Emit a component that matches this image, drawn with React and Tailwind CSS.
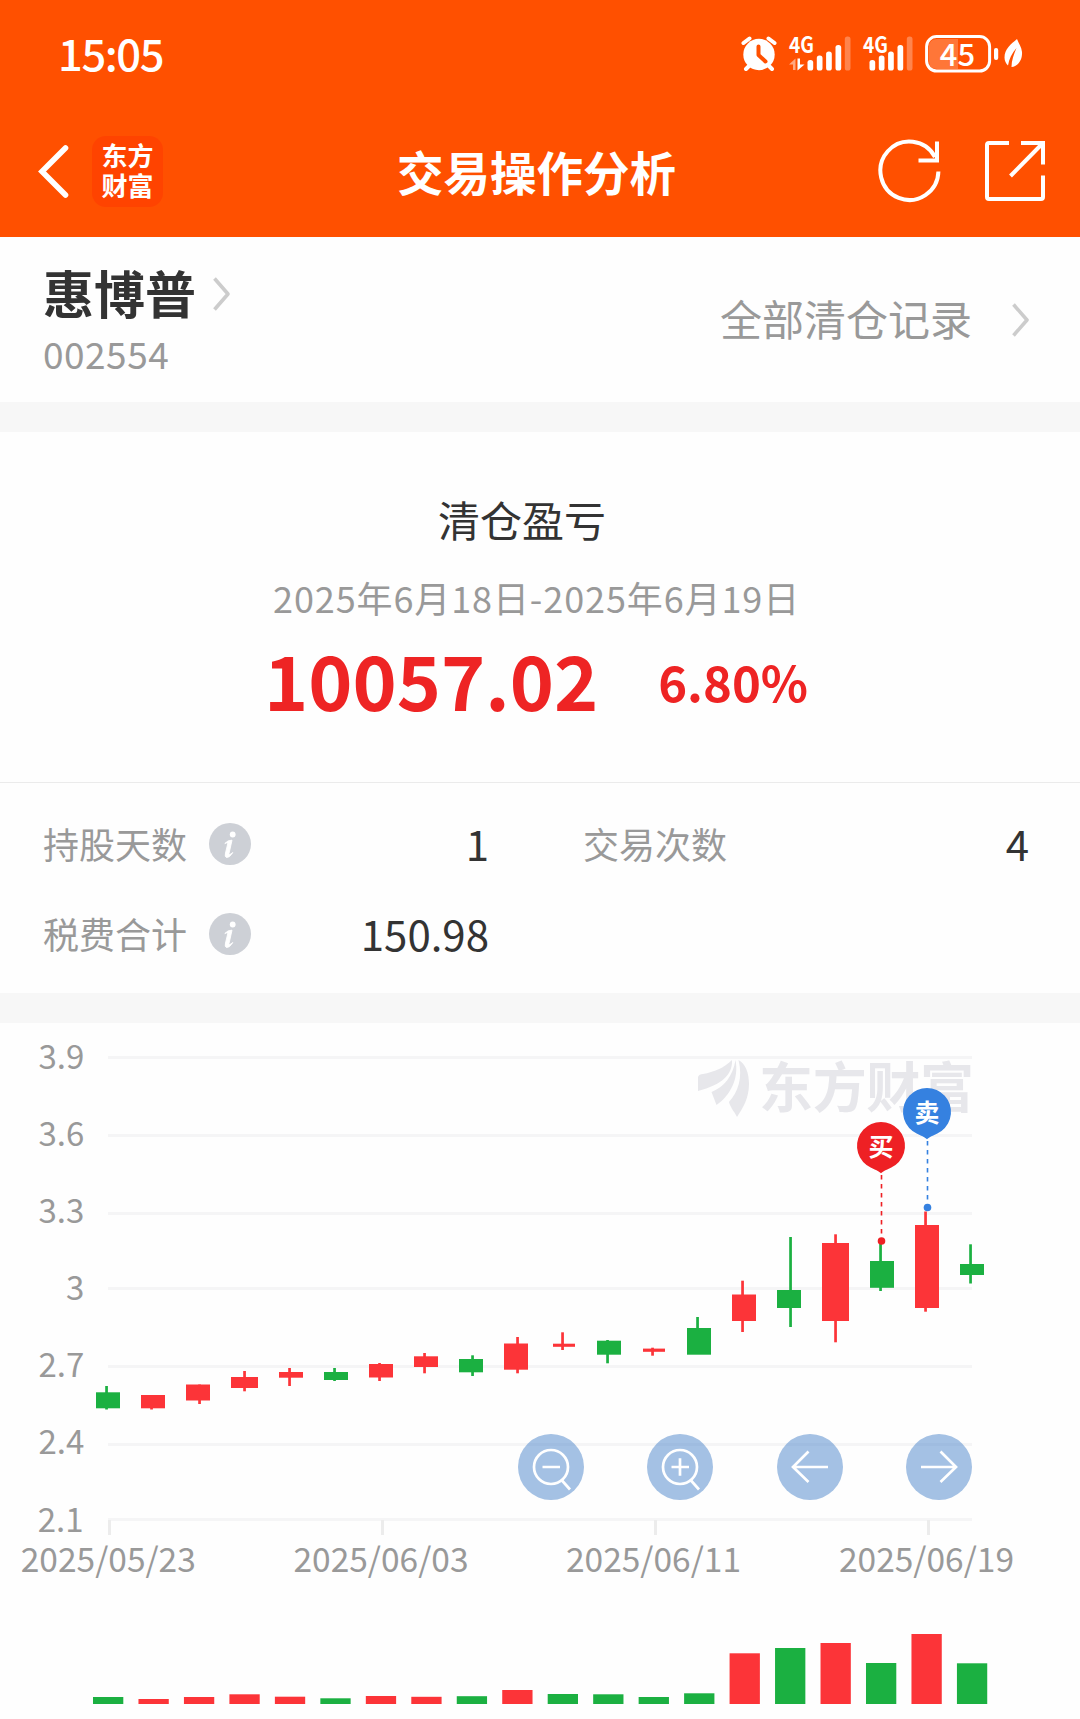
const RED = '#fc3438';
const GREEN = '#1bb041';

// body: [x, width, top, bottom], wick: [x, top, bottom]
const candles = [
  { c: GREEN, body: [96, 24, 1392.3, 1408.3], wick: [106.5, 1386, 1409.5] },
  { c: RED, body: [141, 24, 1395, 1408.3], wick: [151.5, 1395, 1409.5] },
  { c: RED, body: [186, 24, 1384.5, 1400.5], wick: [199.5, 1384.5, 1404] },
  { c: RED, body: [231, 27, 1377, 1388], wick: [244.5, 1371, 1391.3] },
  { c: RED, body: [279, 24, 1372, 1377.7], wick: [289.5, 1368, 1386] },
  { c: GREEN, body: [324, 24, 1372, 1380], wick: [334.5, 1368, 1381] },
  { c: RED, body: [369, 24, 1364, 1377.5], wick: [379.5, 1363, 1381] },
  { c: RED, body: [414, 24, 1356.3, 1367], wick: [424.5, 1353, 1373.3] },
  { c: GREEN, body: [459, 24, 1359, 1372.3], wick: [472.5, 1355.3, 1376] },
  { c: RED, body: [504, 24, 1343.5, 1369.7], wick: [517.5, 1337, 1373.3] },
  { c: RED, body: [553, 22, 1343.7, 1346.8], wick: [562.5, 1332.3, 1350] },
  { c: GREEN, body: [597, 24, 1340.7, 1354.7], wick: [607.5, 1340, 1363.3] },
  { c: RED, body: [643, 22, 1348.6, 1351.8], wick: [652.5, 1347.7, 1355.7] },
  { c: GREEN, body: [687, 24, 1328, 1354.7], wick: [697.5, 1317, 1354] },
  { c: RED, body: [732, 24, 1294.5, 1321], wick: [742.5, 1280.7, 1332] },
  { c: GREEN, body: [777, 24, 1290, 1308], wick: [790.5, 1237, 1327] },
  { c: RED, body: [822, 27, 1243, 1321], wick: [835.5, 1234.3, 1342.3] },
  { c: GREEN, body: [870, 24, 1261, 1287.8], wick: [880.5, 1244, 1291] },
  { c: RED, body: [915, 24, 1225, 1308], wick: [925.5, 1211.5, 1311.7] },
  { c: GREEN, body: [960, 24, 1264, 1275], wick: [970.5, 1244.3, 1283.5] },
];

const volumeTops = [
  1697, 1699, 1697, 1694.3, 1696.7, 1698.3, 1696, 1696.8, 1696.2, 1690, 1694, 1694.3, 1697, 1693.3, 1653.3, 1648,
  1643, 1663, 1634, 1663.3,
];
const volumeColors = [...'grrrrgrrgrggggrgrgrg'].map((k) => (k === 'g' ? GREEN : RED));

const yAxis = [
  ['3.9', 1057.5, 1068.7],
  ['3.6', 1135.5, 1145.7],
  ['3.3', 1213.5, 1222.7],
  ['3', 1288.5, 1299.7],
  ['2.7', 1366.5, 1377],
  ['2.4', 1444.5, 1454],
  ['2.1', 1519.5, 1532],
];

const xAxis = [
  ['2025/05/23', 109.5, 108.3],
  ['2025/06/03', 382.5, 381],
  ['2025/06/11', 655.5, 653.5],
  ['2025/06/19', 928.5, 926.5],
];

function Signal({ arrows }) {
  return (
    <svg className="overflow-visible" width="62" height="36" viewBox="0 0 62 36" fill="#fff">
      <text x="0" y="17.300" fontSize="22.5" fontWeight="700" textLength="25" lengthAdjust="spacingAndGlyphs">4G</text>
      <g transform={arrows ? 'translate(18.5 0)' : 'translate(6.5 0)'}>
        <rect x="0" y="24" width="5.7" height="10.5" rx="2.6" />
        <rect x="9.3" y="19.5" width="5.7" height="15" rx="2.6" />
        <rect x="18.6" y="15.5" width="5.7" height="19" rx="2.6" />
        <rect x="28" y="9" width="5.7" height="25.5" rx="2.6" />
        <rect x="37.3" y="0.5" width="5.7" height="34" rx="2.6" fillOpacity="0.3" />
      </g>
      {arrows && (
        <>
          <path d="M0 28.5 6.5 22.5V34H4V28.5Z" fillOpacity="0.5" />
          <path d="M8.5 22.5H11V28.5H15.5L8.5 34.5Z" />
        </>
      )}
    </svg>
  );
}

function StatusBar() {
  return (
    <div className="flex h-[108px] items-center justify-between pl-[58px] pr-[57px]">
      <span className="pb-[3px] text-[43.5px] font-medium leading-none tracking-[-1.4px]">15:05</span>
      <div className="flex items-center">
        <svg width="36" height="36" viewBox="0 0 36 36" fill="none">
          <g stroke="#fff" strokeLinecap="round">
            <path d="M2.5 7 8.5 2.5M33.5 7 27.5 2.5" strokeWidth="4" />
            <path d="M8 30 5 33M28 30 31 33" strokeWidth="4" />
          </g>
          <circle cx="18" cy="18.5" r="15.7" fill="#fff" />
          <path d="M17.5 10.5V19L24.5 25.5" stroke="#ff5000" strokeWidth="4" strokeLinecap="round" strokeLinejoin="round" />
        </svg>
        <div className="ml-[12px]"><Signal arrows /></div>
        <div className="ml-[12px]"><Signal /></div>
        <svg className="overflow-visible" width="98" height="38" viewBox="0 0 98 38" fill="none">
          <path d="M12 4H33V34H12Q4 34 4 26V12Q4 4 12 4Z" fill="#fff" fillOpacity="0.22" />
          <rect x="1.6" y="1.6" width="63" height="34.4" rx="10" stroke="#fff" strokeWidth="3" />
          <rect x="69" y="13" width="4.2" height="12" rx="2" fill="#fff" />
          <text x="32.5" y="30.5" fontSize="31" fontWeight="500" textAnchor="middle" fill="#fff">45</text>
          <path d="M92 4C86 9 79.500 14 79.500 22.500C79.500 26 81 28.500 83 30.500C84 24 87 18 91.500 13C89 19 86.500 25 86.500 32C94 31 97.500 24 97 17C96.500 12 94 9 92 4Z" fill="#fff" />
        </svg>
      </div>
    </div>
  );
}

function NavBar() {
  return (
    <div className="grid h-[126px] grid-cols-[1fr_auto_1fr] items-center">
      <div className="flex items-center pl-[36px]">
        <svg width="36" height="56" viewBox="0 0 36 56" fill="none" stroke="#fff" strokeWidth="5.600" strokeLinecap="round">
          <path d="M29.500 5 6 28.500 29.500 52" />
        </svg>
        <div className="ml-[20px] flex h-[71px] w-[71px] flex-col items-center justify-center rounded-[14px] bg-[#ff4300] pb-[2px] text-[26px] font-bold leading-[30px]">
          <span>东方</span>
          <span>财富</span>
        </div>
      </div>
      <h1 className="pb-[1px] pr-[7px] text-[46.5px] font-bold leading-[60px]">交易操作分析</h1>
      <div className="flex items-center justify-end pr-[33px]">
        <svg width="64" height="64" viewBox="0 0 64 64" fill="none" stroke="#fff" strokeWidth="4">
          <path d="M60.400 32.500A29 29.200 0 1 1 57 18" />
          <path d="M59 2.500V21.500H40.500" />
        </svg>
        <svg className="ml-[42px] mr-[1px]" width="62" height="62" viewBox="0 0 62 62" fill="none" stroke="#fff" strokeWidth="4">
          <path d="M25 3H5Q3 3 3 5V57Q3 59 5 59H57Q59 59 59 57V35.500" />
          <path d="M37 3H59V24.500M58 4 26.500 36" />
        </svg>
      </div>
    </div>
  );
}

function Chevron() {
  return (
    <svg width="18" height="34" viewBox="0 0 18 34" fill="none" stroke="#ccc" strokeWidth="3.600">
      <path d="M1.500 1.500 15 17 1.500 32.500" strokeLinejoin="round" />
    </svg>
  );
}

function InfoIcon() {
  return (
    <svg width="42" height="42" viewBox="0 0 42 42">
      <circle cx="21" cy="21" r="21" fill="#cdd0d6" />
      <circle cx="23.700" cy="11.500" r="2.900" fill="#fff" />
      <path d="M15.800 20.500Q19 16.800 23 17.200L20 30.500Q19.500 33 23.800 29.500Q20.500 35 17.500 34.500Q15.500 34 16.500 30L18.800 20.500Q18.500 19 15.800 20.500Z" fill="#fff" stroke="#fff" strokeWidth="0.900" strokeLinejoin="round" />
    </svg>
  );
}

function Stat({ label, value, info }) {
  return (
    <div className="flex h-[90px] items-center">
      <span className="text-[36px] leading-none text-[#999]">{label}</span>
      {info && <span className="ml-[22px] pt-[2px]"><InfoIcon /></span>}
      <span className="ml-auto text-[42px] leading-none text-[#333]">{value}</span>
    </div>
  );
}

function Pin({ x, y, tail, color, label }) {
  return (
    <g transform={`translate(${x} ${y})`}>
      <path d={`M0.500 27V${tail - 4}`} stroke={color} strokeWidth="1.600" strokeDasharray="4.500 4.500" strokeDashoffset="-2" />
      <path d="M0 27.300C-3 24.500-9 22.500-14.500 19A24 24 0 1 1 14.500 19C9 22.500 3 24.500 0 27.300Z" fill={color} />
      <circle cx="0.500" cy={tail} r="3.800" fill={color} />
      <text x="0" y="9.500" fontSize="25" fontWeight="700" textAnchor="middle" fill="#fff">{label}</text>
    </g>
  );
}

function Chart() {
  return (
    <svg className="block" width="1080" height="696" viewBox="0 1023 1080 696">
      {yAxis.map(([label, line, base]) => (
        <g key={label}>
          <rect x="108" y={line - 1.5} width="864" height="3" fill="#f5f5f6" />
          <text x={label === '2.1' ? 83.5 : 84.3} y={base} fontSize="33" textAnchor="end" fill="#999">{label}</text>
        </g>
      ))}
      {xAxis.map(([label, tick, mid]) => (
        <g key={label}>
          <rect x={tick - 1.5} y="1520" width="3" height="15" fill="#ececec" />
          <text x={mid} y="1572" fontSize="33.500" textAnchor="middle" fill="#999">{label}</text>
        </g>
      ))}
      <g fill="#e7e7eb">
        <path d="M698 1091V1077Q699 1074 703 1074C714 1072 724 1068 732 1060C733 1074 722 1085 698 1091Z" />
        <path d="M735.500 1060C739 1078 731 1095 716.500 1105L711.500 1092C724 1087 733 1076 735.500 1060Z" />
        <path d="M738.500 1060C746 1064 749 1074 749 1084C749 1098 743 1108 737 1117C734 1111 730 1107 729 1102C738 1092 743 1078 738.500 1060Z" />
        <text x="759" y="1107.500" fontSize="54" fontWeight="700" textLength="215" lengthAdjust="spacing">东方财富</text>
      </g>
      {candles.map(({ c, body, wick }, i) => (
        <g key={i} fill={c}>
          <rect x={wick[0] - 1.3} y={wick[1]} width="2.700" height={wick[2] - wick[1]} />
          <rect x={body[0]} y={body[2]} width={body[1]} height={body[3] - body[2]} />
        </g>
      ))}
      <Pin x={881} y={1146} tail={95} color="#ee2024" label="买" />
      <Pin x={927} y={1112} tail={95.5} color="#3581e0" label="卖" />
      {volumeTops.map((top, i) => (
        <rect key={i} x={93 + i * 45.47} y={top} width="30.300" height={1704 - top} fill={volumeColors[i]} />
      ))}
    </svg>
  );
}

const controls = {
  缩小: <><circle cx="33" cy="33" r="17" /><path d="M44 46.500 52 55.500M24.500 33H42" /></>,
  放大: <><circle cx="33" cy="33" r="17" /><path d="M44 46.500 52 55.500M24.500 33H42M33 24.300V41.700" /></>,
  左移: <path d="M51 33H16M31.500 17.500 16 33 31.500 48" />,
  右移: <path d="M15 33H50M34.500 17.500 50 33 34.500 48" />,
};

function ChartControls() {
  return (
    <div className="absolute left-[518px] top-[411px] flex w-[454px] justify-between">
      {Object.entries(controls).map(([name, icon]) => (
        <button key={name} aria-label={name} className="h-[66px] w-[66px] rounded-full bg-[#4983c9]/50">
          <svg width="66" height="66" viewBox="0 0 66 66" fill="none" stroke="#fff" strokeWidth="2.700">{icon}</svg>
        </button>
      ))}
    </div>
  );
}

export default function App() {
  return (
    <div className="h-[1719px] w-[1080px] overflow-hidden bg-[#fefefe] font-['Noto_Sans_CJK_SC',sans-serif]">
      <header className="h-[237px] bg-[#ff5000] text-white">
        <StatusBar />
        <NavBar />
      </header>

      <section className="flex h-[165px] justify-between pl-[43px] pr-[50px]">
        <div className="pt-[19px]">
          <div className="flex h-[72px] items-center">
            <span className="text-[51px] font-bold leading-none text-[#333]">惠博普</span>
            <span className="ml-[17px] pt-[4px]"><Chevron /></span>
          </div>
          <div className="pt-[1px] text-[37px] leading-[48px] tracking-[0.5px] text-[#999]">002554</div>
        </div>
        <div className="flex items-center">
          <span className="pb-[3px] text-[42px] leading-none text-[#999]">全部清仓记录</span>
          <span className="ml-[40px]"><Chevron /></span>
        </div>
      </section>
      <div className="h-[30px] bg-[#f7f7f7]" />

      <section className="flex h-[351px] flex-col border-b border-[#ebebeb] pt-[57px]">
        <div className="pl-[438px] text-[42px] leading-[60px] text-[#333]">清仓盈亏</div>
        <div className="mt-[18px] pl-[273px] text-[36px] leading-[60px] tracking-[0.9px] text-[#999]">2025年6月18日-2025年6月19日</div>
        <div className="mt-[2px] flex items-baseline pl-[264px] font-bold text-[#ee2424]">
          <span className="text-[75px] leading-[100px]">10057.02</span>
          <span className="ml-[60px] mt-[4px] self-center text-[49px] leading-[60px]">6.80%</span>
        </div>
      </section>

      <section className="grid h-[210px] grid-cols-[446px_446px] content-start gap-x-[94px] pl-[43px] pt-[15px]">
        <Stat label="持股天数" value="1" info />
        <Stat label="交易次数" value="4" />
        <Stat label="税费合计" value="150.98" info />
      </section>
      <div className="h-[30px] bg-[#f7f7f7]" />

      <section className="relative">
        <Chart />
        <ChartControls />
      </section>
    </div>
  );
}
